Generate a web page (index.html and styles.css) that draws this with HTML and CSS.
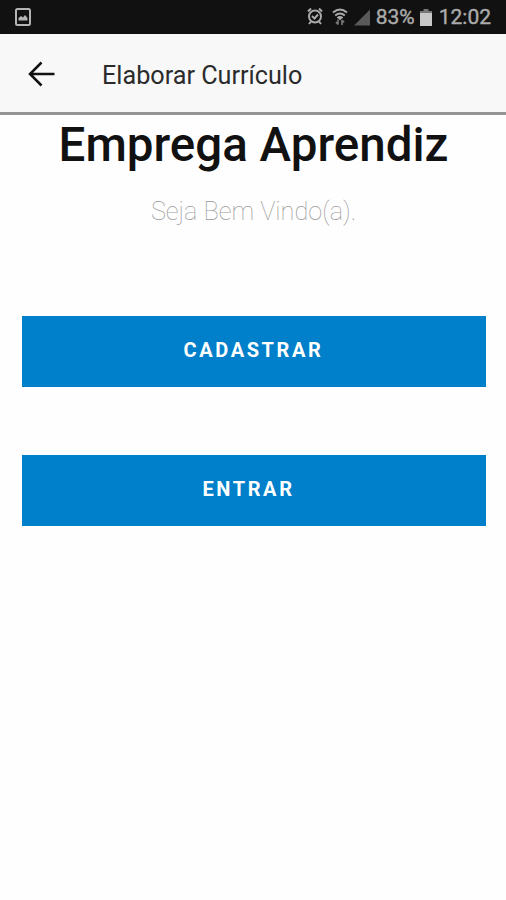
FILE: index.html
```html
<!DOCTYPE html>
<html lang="pt-BR">
<head>
<meta charset="utf-8">
<title>Elaborar Currículo</title>
<link rel="stylesheet" href="styles.css">
</head>
<body>
<div class="status">
  <svg class="picture" width="16" height="18" viewBox="0 0 16 18"><rect x="1" y="1" width="14" height="16" rx="1.5" fill="none" stroke="#b4b4b4" stroke-width="2"/><path d="M3.500 12.500V10l2.500-2 2 1.500L10 7l2.500 3v2.500z" fill="#b4b4b4"/></svg>
  <svg class="alarm" width="16" height="18" viewBox="0 0 16 18"><g fill="none" stroke="#aaa" stroke-width="2"><circle cx="8" cy="9.500" r="6"/><path d="M5 9l2.500 2.500L11 7.500M1 4.500L4 1.500M15 4.500L12 1.500M4 14.500l-2 2.500M12 14.500l2 2.500"/></g></svg>
  <svg class="wifi" width="16" height="18" viewBox="0 0 16 18"><g fill="none" stroke="#aaa" stroke-width="2"><path d="M1 4.500q7-6 14 0M3.200 7.500q4.800-4 9.600 0M5.400 10q2.600-2 5.200 0"/></g><path d="M8 12.500l-2-2.500h4z" fill="#aaa"/><path d="M6 11.500v5M4 14l2 2.500M10 17v-5M10 12l2 2.500" fill="none" stroke="#777" stroke-width="1.700"/></svg>
  <svg class="signal" width="16" height="17" viewBox="0 0 17 17"><path d="M17 0v17H0z" fill="#595959"/></svg>
  <span class="percent">83%</span>
  <svg class="battery" width="12" height="17" viewBox="0 0 12 17"><path d="M3.500 0h5v2H12v3H0V2h3.500z" fill="#777"/><path d="M0 4h12v13H0z" fill="#c8c8c8"/></svg>
  <span class="clock">12:02</span>
</div>
<header class="bar">
  <svg class="back" width="28" height="28" viewBox="0 0 28 28"><path d="M26.500 14H2M13.500 2.500L2 14l11.500 11.500" fill="none" stroke="#111" stroke-width="2.500"/></svg>
  <span class="bar-title">Elaborar Currículo</span>
</header>
<main>
  <h1>Emprega Aprendiz</h1>
  <p>Seja Bem Vindo(a).</p>
  <button>CADASTRAR</button>
  <button class="enter">ENTRAR</button>
</main>
</body>
</html>
```
FILE: styles.css
```css
*{box-sizing:border-box}
body{margin:0;background:#fefefe;font-family:Roboto,sans-serif;height:900px;overflow:hidden}
.status{height:34px;background:#111;display:flex;align-items:center;padding:0 15px;color:#aaa;font-size:21px}
.status svg{flex:none}
.picture{margin-top:-1px}
.alarm{margin-left:auto;margin-top:-2px}
.wifi{margin-left:9px;margin-top:-1px}
.signal{margin-left:6px}
.percent{margin-left:6px;-webkit-text-stroke:.4px #aaa}
.battery{margin-left:5px}
.clock{margin-left:7px;-webkit-text-stroke:.4px #aaa}
.bar{height:81px;background:#f8f8f8;border-bottom:3px solid #959595;display:flex;align-items:center;padding-left:28px}
.bar-title{margin-left:46px;padding-top:4px;font-size:25.200px;color:#2b2b2b}
.back{margin-top:1px}
main{padding:0 20.500px 0 21.500px;text-align:center}
h1{margin:0;font-size:47.500px;line-height:60px;font-weight:500;color:#111}
p{margin:20px 0 0;font-size:25.300px;line-height:34px;font-weight:100;color:#999}
button{display:block;width:464px;height:71px;border:0;background:#007fca;color:#fff;font:700 20px Roboto,sans-serif;letter-spacing:2.600px;margin-top:68px;padding:0 0 4px}
p + button{margin-top:87px}
.enter{padding-right:10px}
```
